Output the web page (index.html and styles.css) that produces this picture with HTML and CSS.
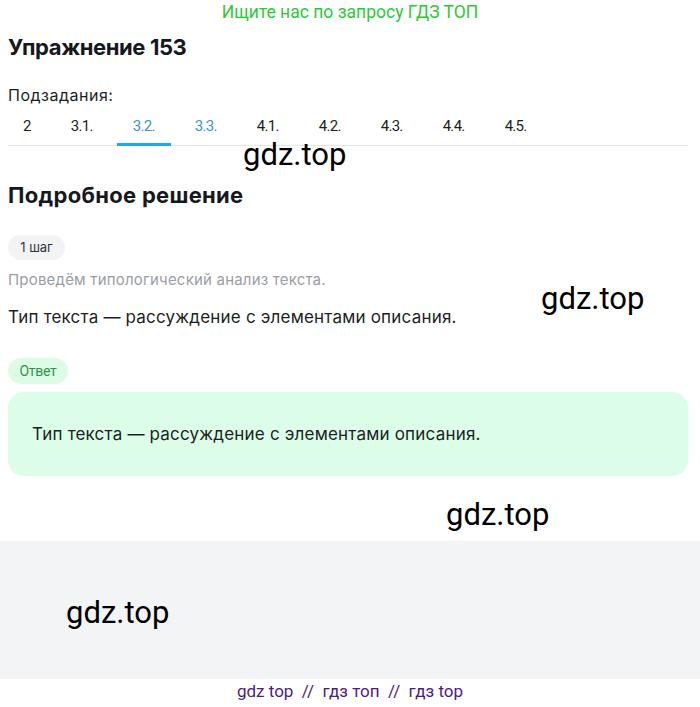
FILE: index.html
```html
<!DOCTYPE html>
<html lang="ru">
<head>
<meta charset="utf-8">
<title>Упражнение 153</title>
<link rel="stylesheet" href="styles.css">
</head>
<body>
<div class="promo">Ищите нас по запросу ГДЗ ТОП</div>
<main class="page">
  <h1 class="title">Упражнение 153</h1>
  <div class="subtitle">Подзадания:</div>
  <nav class="tabs">
    <span class="tab">2</span>
    <span class="tab">3.1.</span>
    <span class="tab tab-active">3.2.</span>
    <span class="tab tab-link">3.3.</span>
    <span class="tab">4.1.</span>
    <span class="tab">4.2.</span>
    <span class="tab">4.3.</span>
    <span class="tab">4.4.</span>
    <span class="tab">4.5.</span>
  </nav>
  <h2 class="section-title">Подробное решение</h2>
  <div class="pill pill-step">1 шаг</div>
  <p class="hint">Проведём типологический анализ текста.</p>
  <p class="text">Тип текста — рассуждение с элементами описания.</p>
  <div class="pill pill-answer">Ответ</div>
  <div class="answer">Тип текста — рассуждение с элементами описания.</div>
</main>
<section class="gray"></section>
<footer class="footer">gdz top &nbsp;//&nbsp; гдз топ &nbsp;//&nbsp; гдз top</footer>

<div class="wm wm1">gdz.top</div>
<div class="wm wm2">gdz.top</div>
<div class="wm wm3">gdz.top</div>
<div class="wm wm4">gdz.top</div>
</body>
</html>
```
FILE: styles.css
```css
* { box-sizing: border-box; }
html, body { margin: 0; padding: 0; }
body {
  position: relative;
  font-family: Inter, "Noto Sans", sans-serif;
  color: #1b1f24;
  background: #fff;
  width: 700px;
  min-height: 707px;
}
.promo {
  height: 24px;
  line-height: 24px;
  text-align: center;
  font-family: Roboto, sans-serif;
  font-size: 17.5px;
  color: #2dc83a;
}
.page {
  padding: 0 12px 0 8px;
}
.title {
  margin: 9px 0 0;
  font-size: 22px;
  line-height: 28px;
  font-weight: 700;
  letter-spacing: -0.4px;
  color: #15191e;
}
.subtitle {
  margin-top: 23px;
  font-size: 16px;
  line-height: 22px;
  letter-spacing: 0.5px;
  color: #1b1f24;
}
.tabs {
  display: flex;
  gap: 8px;
  border-bottom: 1px solid #e6e8eb;
}
.tab {
  padding: 10px 16px 7px;
  font-family: Roboto, sans-serif;
  font-size: 15px;
  line-height: 20px;
  letter-spacing: -0.7px;
  color: #1b1f24;
  border-bottom: 3px solid transparent;
  margin-bottom: -1px;
}
.tab:first-child { margin-left: -1px; }
.tab-active {
  color: #3b95c9;
  border-bottom-color: #27a8dc;
}
.tab-link { color: #3b95c9; }
.section-title {
  margin: 35px 0 0;
  font-size: 22px;
  line-height: 28px;
  font-weight: 700;
  letter-spacing: 0.3px;
  color: #15191e;
}
.pill {
  display: inline-block;
  height: 25px;
  line-height: 25px;
  border-radius: 13px;
  padding: 0 10px;
}
.pill-step {
  margin-top: 26px;
  width: 57px;
  text-align: center;
  font-size: 13px;
  background: #f2f3f5;
  color: #30353b;
}
.hint {
  margin: 10px 0 0;
  font-size: 15px;
  line-height: 20px;
  letter-spacing: 0.2px;
  color: #9a9ea4;
}
.text {
  margin: 15px 0 0;
  font-size: 17px;
  line-height: 24px;
  letter-spacing: 0.2px;
  color: #1b1f24;
}
.pill-answer {
  margin-top: 29px;
  width: 60px;
  height: 26px;
  line-height: 26px;
  text-align: center;
  font-family: Roboto, sans-serif;
  font-size: 14px;
  letter-spacing: -0.3px;
  background: #dcfce6;
  color: #2e9449;
}
.answer {
  margin-top: 8px;
  padding: 30px 24px;
  background: #dcfde8;
  border-radius: 16px;
  font-size: 17px;
  line-height: 24px;
  letter-spacing: 0.2px;
  color: #1b1f24;
}
.gray {
  margin-top: 65px;
  height: 138px;
  background: #f3f4f6;
}
.footer {
  height: 27px;
  line-height: 24px;
  text-align: center;
  font-family: Roboto, sans-serif;
  font-size: 17px;
  color: #4b1d80;
}
.wm {
  position: absolute;
  font-family: Roboto, sans-serif;
  font-size: 31px;
  line-height: 34px;
  color: #000;
}
.wm1 { left: 243px; top: 138px; }
.wm2 { left: 541px; top: 282px; }
.wm3 { left: 446px; top: 498px; }
.wm4 { left: 66px; top: 596px; }
```
